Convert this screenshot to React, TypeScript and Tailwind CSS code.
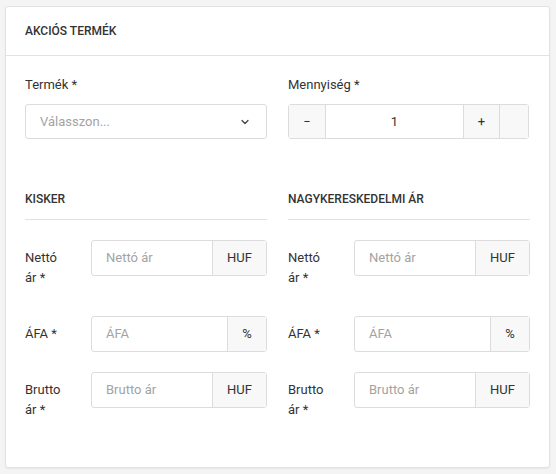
import { ChevronDown } from "lucide-react";

const FONT = { fontFamily: "Roboto, 'Liberation Sans', sans-serif" };

function AddonInput({ placeholder, addon, addonWidth }: { placeholder: string; addon: string; addonWidth: string }) {
  return (
    <div className="flex h-[36px] flex-1 rounded-[3px] border border-[#dcdcdc] bg-white">
      <div className="flex flex-1 items-center px-[14px] text-[13px] text-[#a3a3a3]">{placeholder}</div>
      <div
        className={`flex items-center justify-center border-l border-[#dcdcdc] bg-[#f8f8f8] text-[13px] text-[#333] ${addonWidth}`}
      >
        {addon}
      </div>
    </div>
  );
}

function PriceRow({ label, placeholder, addon, addonWidth }: { label: React.ReactNode; placeholder: string; addon: string; addonWidth: string }) {
  return (
    <div className="mb-[20px] flex items-start">
      <label className="w-[66px] shrink-0 py-[8px] pr-2 text-[13px] leading-[20px] text-[#333]">{label}</label>
      <AddonInput placeholder={placeholder} addon={addon} addonWidth={addonWidth} />
    </div>
  );
}

function PriceSection({ title }: { title: string }) {
  return (
    <div className="flex-1">
      <h3 className="border-b border-[#e2e2e2] pb-[10px] text-[12px] font-medium uppercase leading-[20px] text-[#333]">
        {title}
      </h3>
      <div className="pt-[20px]">
        <PriceRow
          label={<>Nettó<br />ár *</>}
          placeholder="Nettó ár"
          addon="HUF"
          addonWidth="w-[54px]"
        />
        <PriceRow label="ÁFA *" placeholder="ÁFA" addon="%" addonWidth="w-[39px]" />
        <PriceRow
          label={<>Brutto<br />ár *</>}
          placeholder="Brutto ár"
          addon="HUF"
          addonWidth="w-[54px]"
        />
      </div>
    </div>
  );
}

export default function App() {
  return (
    <div className="h-[474px] w-[556px] bg-[#f4f4f4] py-[6px] pl-[5px] pr-[6px]" style={FONT}>
      <div className="h-[462px] rounded-[3px] border border-[#e2e2e2] bg-white shadow-[0_1px_2px_rgba(0,0,0,0.05)]">
        {/* Header */}
        <div className="flex h-[49px] items-center border-b border-[#e2e2e2] px-[19px]">
          <h2 className="text-[12px] font-medium uppercase text-[#333]">Akciós termék</h2>
        </div>

        {/* Body */}
        <div className="px-[19px] pt-[19px]">
          <div className="flex gap-[21px]">
            <div className="flex-1">
              <label className="mb-[9px] block text-[13px] leading-[20px] text-[#333]">Termék *</label>
              <div className="flex h-[35px] items-center justify-between rounded-[3px] border border-[#dcdcdc] px-[14px] text-[13px] text-[#a3a3a3]">
                <span>Válasszon...</span>
                <ChevronDown className="mr-[1px] h-[12px] w-[12px] text-[#444]" strokeWidth={2.5} />
              </div>
            </div>
            <div className="flex-1">
              <label className="mb-[9px] block text-[13px] leading-[20px] text-[#333]">Mennyiség *</label>
              <div className="mr-[1px] flex h-[35px] rounded-[3px] border border-[#dcdcdc] text-[13px] text-[#333]">
                <button className="flex w-[37px] items-center justify-center border-r border-[#dcdcdc] bg-[#f8f8f8]">−</button>
                <div className="flex flex-1 items-center justify-center bg-white">1</div>
                <button className="flex w-[36px] items-center justify-center border-l border-[#dcdcdc] bg-[#f8f8f8]">+</button>
                <div className="w-[29px] border-l border-[#dcdcdc] bg-[#f8f8f8]" />
              </div>
            </div>
          </div>

          <div className="mt-[50px] flex gap-[21px]">
            <PriceSection title="Kisker" />
            <PriceSection title="Nagykereskedelmi ár" />
          </div>
        </div>
      </div>
    </div>
  );
}
